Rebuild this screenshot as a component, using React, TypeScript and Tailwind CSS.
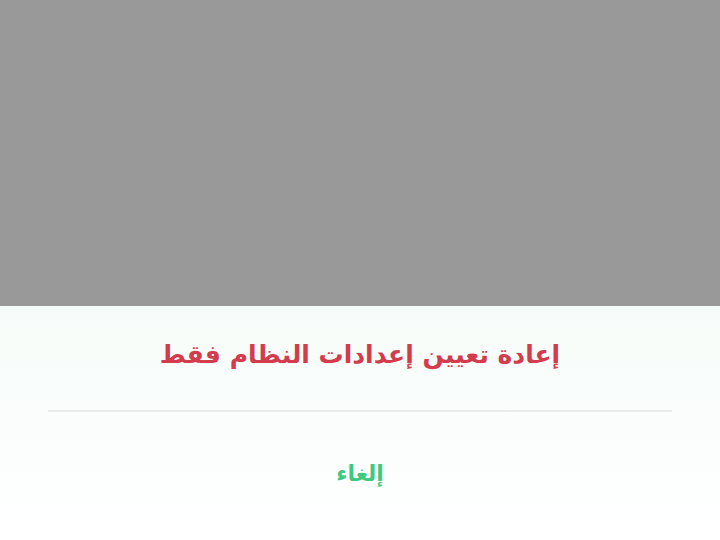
export default function App() {
  return (
    <div dir="rtl" className="w-[720px] h-[540px] flex flex-col bg-[#999999]" style={{ fontFamily: '"DejaVu Sans", sans-serif' }}>
      <div className="h-[306px] shrink-0" />
      <div className="flex-1 flex flex-col bg-gradient-to-b from-[#f6fcf9] to-white">
        <div className="h-[104px] flex items-center justify-center pb-[6px]">
          <span className="text-[25px] font-bold text-[#d23c4c]">إعادة تعيين إعدادات النظام فقط</span>
        </div>
        <div className="mx-[48px] h-[2px] bg-[#ebebeb]" />
        <div className="flex-1 flex items-center justify-center pb-[6px]">
          <span className="text-[22px] font-bold text-[#3ec97c]">إلغاء</span>
        </div>
      </div>
    </div>
  );
}
